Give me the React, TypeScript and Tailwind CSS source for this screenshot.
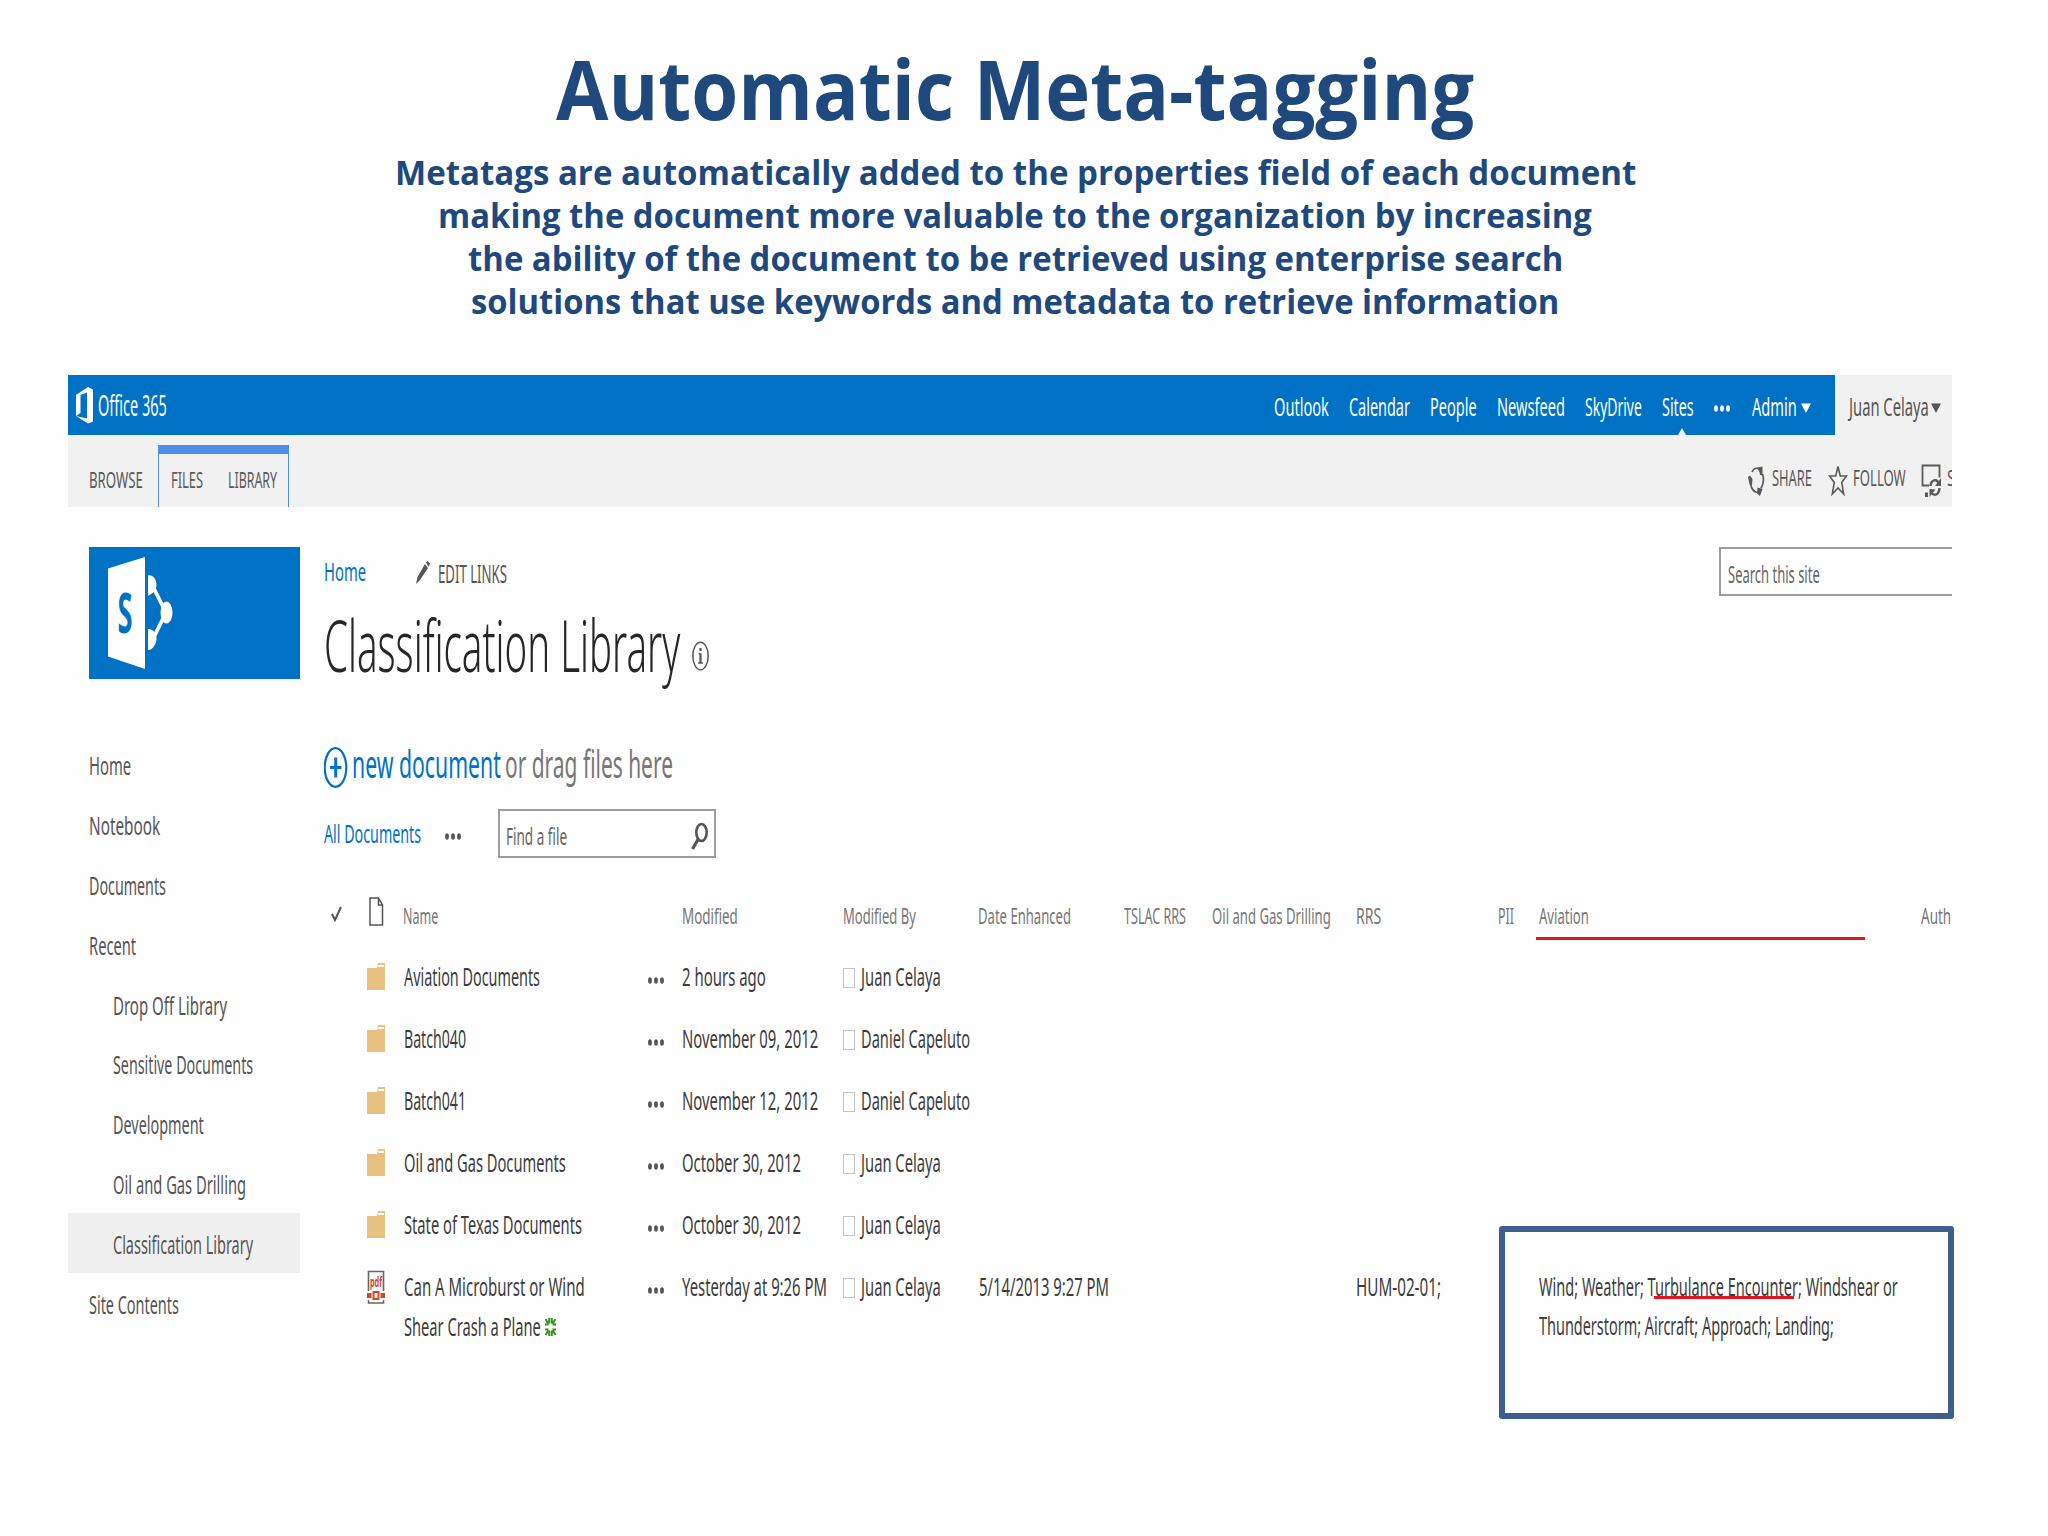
import React, { useLayoutEffect, useRef } from 'react';

type FitProps = { className?: string; children: React.ReactNode };

// Squeezes a single line of text so that it fills the width of its box
const Fit = ({ className = '', children }: FitProps) => {
  const box = useRef<HTMLDivElement>(null);
  const text = useRef<HTMLSpanElement>(null);

  useLayoutEffect(() => {
    if (!box.current || !text.current) return;
    const scale = box.current.getBoundingClientRect().width / text.current.offsetWidth;
    text.current.style.transform = `scaleX(${scale})`;
  }, []);

  return (
    <div ref={box} className={`shrink-0 whitespace-nowrap ${className}`}>
      <span ref={text} className="inline-block origin-left">{children}</span>
    </div>
  );
};

const subtitle = [
  { text: 'Metatags are automatically added to the properties field of each document', width: 'w-[1241px]' },
  { text: 'making the document more valuable to the organization by increasing', width: 'w-[1154px]' },
  { text: 'the ability of the document to be retrieved using enterprise search', width: 'w-[1095px]' },
  { text: 'solutions that use keywords and metadata to retrieve information', width: 'w-[1088px]' },
];

const suiteLinks = [
  { text: 'Outlook', width: 'w-[55px]' },
  { text: 'Calendar', width: 'w-[61px]' },
  { text: 'People', width: 'w-[47px]' },
  { text: 'Newsfeed', width: 'w-[68px]' },
  { text: 'SkyDrive', width: 'w-[57px]' },
  { text: 'Sites', width: 'w-[32px]', active: true },
];

const sideLinks = [
  { text: 'Home', width: 'w-[42px]' },
  { text: 'Notebook', width: 'w-[71px]' },
  { text: 'Documents', width: 'w-[77px]' },
  { text: 'Recent', width: 'w-[47px]' },
  { text: 'Drop Off Library', width: 'w-[114px]', nested: true },
  { text: 'Sensitive Documents', width: 'w-[140px]', nested: true },
  { text: 'Development', width: 'w-[91px]', nested: true },
  { text: 'Oil and Gas Drilling', width: 'w-[133px]', nested: true },
  { text: 'Classification Library', width: 'w-[140px]', nested: true, selected: true },
  { text: 'Site Contents', width: 'w-[90px]' },
];

const juan = { text: 'Juan Celaya', width: 'w-[80px]' };
const daniel = { text: 'Daniel Capeluto', width: 'w-[109px]' };

const folders = [
  { name: 'Aviation Documents', nameWidth: 'w-[136px]', modified: '2 hours ago', modifiedWidth: 'w-[84px]', by: juan },
  { name: 'Batch040', nameWidth: 'w-[62px]', modified: 'November 09, 2012', modifiedWidth: 'w-[136px]', by: daniel },
  { name: 'Batch041', nameWidth: 'w-[62px]', modified: 'November 12, 2012', modifiedWidth: 'w-[136px]', by: daniel },
  { name: 'Oil and Gas Documents', nameWidth: 'w-[162px]', modified: 'October 30, 2012', modifiedWidth: 'w-[119px]', by: juan },
  { name: 'State of Texas Documents', nameWidth: 'w-[178px]', modified: 'October 30, 2012', modifiedWidth: 'w-[119px]', by: juan },
];

const columns =
  'grid grid-cols-[43px_36.5px_244.5px_33.5px_161px_136.5px_145px_88px_145px_142px_39.5px_382.5px_31px]';

const Dots = ({ className = '' }: { className?: string }) => (
  <svg className={`shrink-0 ${className}`} width="16" height="7" viewBox="0 0 16 7" fill="currentColor">
    <ellipse cx="2" cy="3.500" rx="1.900" ry="3.200" />
    <ellipse cx="8" cy="3.500" rx="1.900" ry="3.200" />
    <ellipse cx="14" cy="3.500" rx="1.900" ry="3.200" />
  </svg>
);

const Caret = ({ className = '' }: { className?: string }) => (
  <svg className={`shrink-0 ${className}`} width="10" height="10" viewBox="0 0 10 10" fill="currentColor">
    <path d="M0 0.500h10L5 10z" />
  </svg>
);

const OfficeLogo = () => (
  <svg className="shrink-0" width="20" height="37" viewBox="0 0 20 37">
    <path fill="#fff" fillRule="evenodd" d="M0 8L12 0l5 2.500v32L12 36.500 0 29l11 2.500V5.500L4.500 8v18L0 29z" />
  </svg>
);

const SharePointLogo = () => (
  <svg width="211" height="132" viewBox="0 0 211 132">
    <path fill="#fff" d="M19 21.500L56 10v112L19 109.500z" />
    <path fill="none" stroke="#fff" strokeWidth="3.800" d="M62 36L77 65.500 62 96" />
    <path fill="#fff" d="M59 28.500c5-1 8.500 4 8.500 10-.5 5-4 8-8.500 10.500z" />
    <path fill="#fff" d="M59 82c5 0 8.500 4 8.500 10-.5 6-4 11-8.500 11z" />
    <ellipse cx="77.500" cy="65.500" rx="6" ry="11" fill="#fff" />
    <text x="28.500" y="85.500" fill="#0072c6" fontFamily="Noto Sans, sans-serif" fontWeight="700" fontSize="56" textLength="15" lengthAdjust="spacingAndGlyphs">S</text>
  </svg>
);

const ShareIcon = () => (
  <svg className="shrink-0" width="17" height="30" viewBox="0 0 17 30" fill="none" stroke="#5a5a5a" strokeWidth="1.700">
    <path d="M4 6C5.500 2.500 8.500 1 11 3.500M14.500 8c1.500 4.500 1 10-1.500 14.500M9.500 26.500C6 26 3.500 23 2.500 18" />
    <path fill="#5a5a5a" stroke="none" d="M9 1.500l5.500-1v9L12 9l-.5-3zM9.500 21.500l5 1.500-2.500 7-3-2.500zM0 11l2-1.500 2.500 3.500L4 19l-2.500-.5z" />
  </svg>
);

const StarIcon = () => (
  <svg className="shrink-0" width="20" height="32" viewBox="0 0 20 32" fill="none" stroke="#5a5a5a" strokeWidth="1.600">
    <path d="M10 2.500l2.300 9.500H18.500l-4.800 6.500 2 11.500L10 24l-5.700 6 2-11.500L1.500 12h6.200z" />
  </svg>
);

const SyncIcon = () => (
  <svg className="shrink-0" width="21" height="34" viewBox="0 0 21 34" fill="none" stroke="#5a5a5a">
    <path strokeWidth="1.800" d="M8 21.500H1.500V1.500h17v12" />
    <path strokeWidth="2.400" d="M9.500 22c.5-6 6-8 8.500-2.500M18.500 24c-.5 7-5.500 9-8.500 4" />
    <path fill="#5a5a5a" stroke="none" d="M20 14v8h-6zM8.500 33v-8l6 .5zM4 28.500h3V33H4z" />
  </svg>
);

const PencilIcon = () => (
  <svg className="shrink-0" width="14" height="23" viewBox="0 0 14 23" fill="#555">
    <path d="M9 3l3 4-8 12-4 4 1.500-7zM10 1.500L11.500 0 14 2.500 12.800 6z" />
  </svg>
);

const FolderIcon = () => (
  <svg className="mt-2" width="18" height="27" viewBox="0 0 18 27">
    <path fill="#e8c07f" d="M0 5h10l1-5h7v27H0z" />
    <path fill="#fff" d="M11.500 2H17v2h-6z" />
  </svg>
);

const PdfIcon = () => (
  <svg className="mt-[5px]" width="18" height="34" viewBox="0 0 18 34">
    <path fill="none" stroke="#666" strokeWidth="1.600" d="M1.500 21V1.500h15V21M1.500 30v3h15v-3" />
    <text x="3" y="17" fill="#d24726" fontFamily="Noto Sans, sans-serif" fontWeight="700" fontSize="15" textLength="12" lengthAdjust="spacingAndGlyphs">pdf</text>
    <path fill="#d24726" d="M0 23h4.500v5H0zM13.500 23H18v5h-4.500z" />
    <path fill="none" stroke="#d24726" strokeWidth="2" d="M6.500 22h5v7h-5z" />
  </svg>
);

const NewBadge = () => (
  <svg className="mt-[12px] ml-[4px] shrink-0" width="11" height="20" viewBox="0 0 11 20" fill="none" stroke="#35941a" strokeWidth="2">
    <path d="M4.200 1v5.500M6.800 1v5.500M4.200 13.500V19M6.800 13.500V19M0 7.500h3.500M7.500 7.500H11M0 12.500h3.500M7.500 12.500H11M0.500 2l3 5M10.500 2l-3 5M0.500 18l3-5M10.500 18l-3-5" />
  </svg>
);

const Person = ({ person }: { person: { text: string; width: string } }) => (
  <div className="flex">
    <div className="mt-[13px] mr-[6px] h-5 w-3 shrink-0 border border-[#c4c4c8]" />
    <Fit className={person.width}>{person.text}</Fit>
  </div>
);

const SuiteBar = () => (
  <div className="flex h-[60px] text-[26px] leading-[63px]">
    <div className="flex grow items-start bg-[#0072c6] text-white">
      <div className="flex grow pl-2">
        <div className="mr-[2px] pt-3"><OfficeLogo /></div>
        <Fit className="w-[69px] text-[29px] leading-[60px]">Office 365</Fit>
      </div>
      <div className="flex gap-5 pr-6">
        {suiteLinks.map((link) => (
          <div key={link.text} className="relative h-[60px]">
            <Fit className={link.width}>{link.text}</Fit>
            {link.active && (
              <svg className="absolute bottom-0 left-1/2" width="8" height="7" viewBox="0 0 8 7">
                <path fill="#f1f1f2" d="M4 0l4 7H0z" />
              </svg>
            )}
          </div>
        ))}
        <Dots className="mt-[30px]" />
        <div className="flex gap-1 pl-[2px]">
          <Fit className="w-[45px]">Admin</Fit>
          <Caret className="mt-[28px]" />
        </div>
      </div>
    </div>
    <div className="flex w-[117px] shrink-0 gap-[2px] bg-[#f1f1f2] pl-[14px] text-[#555]">
      <Fit className="w-[80px]">Juan Celaya</Fit>
      <Caret className="mt-[28px]" />
    </div>
  </div>
);

const Ribbon = () => (
  <div className="flex h-[72px] overflow-hidden bg-[#f1f1f2] text-[22.5px] leading-6 text-[#5a5a5a]">
    <div className="flex w-[90px] pt-[33px] pl-[21px]">
      <Fit className="w-[54px]">BROWSE</Fit>
    </div>
    <div className="mt-[10px] flex w-[131px] gap-[25px] border-x border-t-[9px] border-[#4f8ee6] pt-[14px] pl-[12px]">
      <Fit className="w-[32px]">FILES</Fit>
      <Fit className="w-[49px]">LIBRARY</Fit>
    </div>
    <div className="flex grow justify-end">
      <div className="mt-[31px] mr-[7px]"><ShareIcon /></div>
      <Fit className="mt-[31px] mr-[16px] w-[40px]">SHARE</Fit>
      <div className="mt-[29px] mr-[5px]"><StarIcon /></div>
      <Fit className="mt-[31px] mr-[15px] w-[53px]">FOLLOW</Fit>
      <div className="mt-[29px] mr-[5px]"><SyncIcon /></div>
      <div className="mt-[31px] w-[5px] overflow-hidden">
        <Fit className="w-[8px]">S</Fit>
      </div>
    </div>
  </div>
);

const Sidebar = () => (
  <div className="w-[232px] shrink-0 pt-10 text-[25px] leading-6 text-[#555]">
    <div className="ml-[21px] h-[132px] bg-[#0072c6]">
      <SharePointLogo />
    </div>
    <div className="mt-[56px]">
      {sideLinks.map((link) => (
        <div
          key={link.text}
          className={`flex h-[59.8px] items-center pt-px ${link.nested ? 'pl-[44.5px]' : 'pl-[20.5px]'} ${link.selected ? 'bg-[#f1f0f1]' : ''}`}
        >
          <Fit className={link.width}>{link.text}</Fit>
        </div>
      ))}
    </div>
  </div>
);

const Library = () => (
  <div className="ml-6 grow pt-10">
    <div className="flex h-[49px] text-[25px] leading-8">
      <Fit className="mt-[8px] w-[42px] text-[#0072c6]">Home</Fit>
      <div className="mt-[14px] ml-[50px]"><PencilIcon /></div>
      <Fit className="mt-[10px] ml-[8px] w-[69px] text-[#555]">EDIT LINKS</Fit>
      <div className="ml-auto w-[233px] border-2 border-r-0 border-[#9d9da1] pt-[9px] pl-[7px] text-[24px] text-[#666]">
        <Fit className="w-[92px]">Search this site</Fit>
      </div>
    </div>

    <div className="mt-[8px] flex h-[80px] text-[72px] leading-[80px] font-light text-[#262626]">
      <Fit className="w-[356px]">Classification Library</Fit>
      <svg className="mt-[37px] ml-[12px] shrink-0" width="17" height="30" viewBox="0 0 17 30" fill="none" stroke="#555">
        <ellipse cx="8.500" cy="15" rx="7.700" ry="13.800" strokeWidth="1.500" />
        <path strokeWidth="2.200" d="M8.500 12.500V22M8.500 7v3" />
        <path strokeWidth="1.400" d="M6.500 12.500h2M6 22h5" />
      </svg>
    </div>

    <div className="mt-[55px] flex h-12 text-[37.5px] leading-[49px]">
      <svg className="mt-[8px] shrink-0" width="24" height="41" viewBox="0 0 24 41" fill="none" stroke="#0072c6">
        <ellipse cx="11.500" cy="20.500" rx="10.800" ry="19.300" strokeWidth="2.200" />
        <path strokeWidth="3" d="M6 20.500h11.500M11.700 10.500v20" />
      </svg>
      <Fit className="ml-[4px] w-[149px] text-[#0072c6]">new document</Fit>
      <Fit className="ml-[4px] w-[168px] text-[#777]">or drag files here</Fit>
    </div>

    <div className="mt-[22px] flex h-[49px] text-[25px] leading-[49px]">
      <Fit className="w-[97px] text-[#0072c6]">All Documents</Fit>
      <Dots className="mt-[24px] ml-[24px] text-[#555]" />
      <div className="ml-[37px] flex w-[218px] border-2 border-[#9d9da1] pl-[6px] text-[23.5px] leading-[51px] text-[#666]">
        <Fit className="w-[61px]">Find a file</Fit>
        <svg className="mt-[11px] ml-[124px] shrink-0" width="17" height="29" viewBox="0 0 17 29" fill="none" stroke="#555">
          <ellipse cx="10.500" cy="10.500" rx="5.200" ry="8.500" strokeWidth="2.600" />
          <path strokeWidth="3.200" d="M7 17.500L1.500 27" />
        </svg>
      </div>
    </div>

    <div className={`${columns} mt-[37px] h-10 text-[22.5px] leading-[42px] text-[#777]`}>
      <svg className="mt-[11px] ml-[7px]" width="11" height="16" viewBox="0 0 11 16" fill="none" stroke="#555" strokeWidth="2">
        <path d="M1 8l3 6L10 1" />
      </svg>
      <svg className="mt-[2px] ml-[2px]" width="15" height="29" viewBox="0 0 15 29" fill="none" stroke="#555" strokeWidth="1.500">
        <path d="M1 1h8.500L13.500 8v20H1zM9.500 1v7h4" />
      </svg>
      <Fit className="-ml-[1px] w-[35px]">Name</Fit>
      <div />
      <Fit className="w-[56px]">Modified</Fit>
      <Fit className="w-[73px]">Modified By</Fit>
      <Fit className="-ml-[1px] w-[93px]">Date Enhanced</Fit>
      <Fit className="w-[62px]">TSLAC RRS</Fit>
      <Fit className="w-[119px]">Oil and Gas Drilling</Fit>
      <Fit className="-ml-[1px] w-[25px]">RRS</Fit>
      <Fit className="-ml-[1px] w-[16px]">PII</Fit>
      <Fit className="w-[50px]">Aviation</Fit>
      <Fit className="w-[30px]">Auth</Fit>
    </div>

    <div className="mt-5 text-[26px] leading-[42px] text-[#3c3c3c]">
      {folders.map((row) => (
        <div key={row.name} className={`${columns} h-[62px]`}>
          <div />
          <FolderIcon />
          <Fit className={row.nameWidth}>{row.name}</Fit>
          <Dots className="mt-[22px] text-[#555]" />
          <Fit className={row.modifiedWidth}>{row.modified}</Fit>
          <Person person={row.by} />
        </div>
      ))}
      <div className={columns}>
        <div />
        <PdfIcon />
        <div>
          <Fit className="w-[181px]">Can A Microburst or Wind</Fit>
          <div className="-mt-[2px] flex">
            <Fit className="w-[137px]">Shear Crash a Plane</Fit>
            <NewBadge />
          </div>
        </div>
        <Dots className="mt-[22px] text-[#555]" />
        <Fit className="w-[145px]">Yesterday at 9:26 PM</Fit>
        <Person person={juan} />
        <Fit className="w-[130px]">5/14/2013 9:27 PM</Fit>
        <div />
        <div />
        <Fit className="-ml-[1px] w-[85px]">HUM-02-01;</Fit>
        <div />
        <div className="pt-px leading-[40px]">
          <Fit className="w-[359px]">Wind; Weather; Turbulance Encounter; Windshear or</Fit>
          <Fit className="-mt-px w-[295px]">Thunderstorm; Aircraft; Approach; Landing;</Fit>
        </div>
      </div>
    </div>
  </div>
);

const App = () => {
  return (
    <div className="relative h-[1536px] w-[2048px] overflow-hidden bg-[#fefefe] font-['Noto_Sans',sans-serif]">
      <div className="flex w-[2030px] flex-col items-center pt-[38px] font-['Open_Sans',sans-serif] font-bold text-[#1f497d]">
        <h1 className="text-[82px] leading-[101px]">
          <Fit className="w-[918px]">Automatic Meta-tagging</Fit>
        </h1>
        <div className="mt-[11px] text-[34.5px] leading-[43px]">
          {subtitle.map((line) => (
            <Fit key={line.text} className={`mx-auto ${line.width}`}>{line.text}</Fit>
          ))}
        </div>
      </div>

      <div className="mt-[53px] ml-[68px] w-[1884px] overflow-hidden">
        <SuiteBar />
        <Ribbon />
        <div className="flex">
          <Sidebar />
          <Library />
        </div>
      </div>

      {/* Presenter's marks over the list */}
      <div className="absolute top-[937px] left-[1536px] h-[3px] w-[329px] bg-[#e8141c]" />
      <div className="absolute top-[1296px] left-[1654px] h-[3px] w-[140px] bg-[#e8141c]" />
      <div className="absolute top-[1226px] left-[1499px] h-[193px] w-[455px] rounded-[3px] border-[6px] border-[#3c5f8e]" />
    </div>
  );
};

export default App;
